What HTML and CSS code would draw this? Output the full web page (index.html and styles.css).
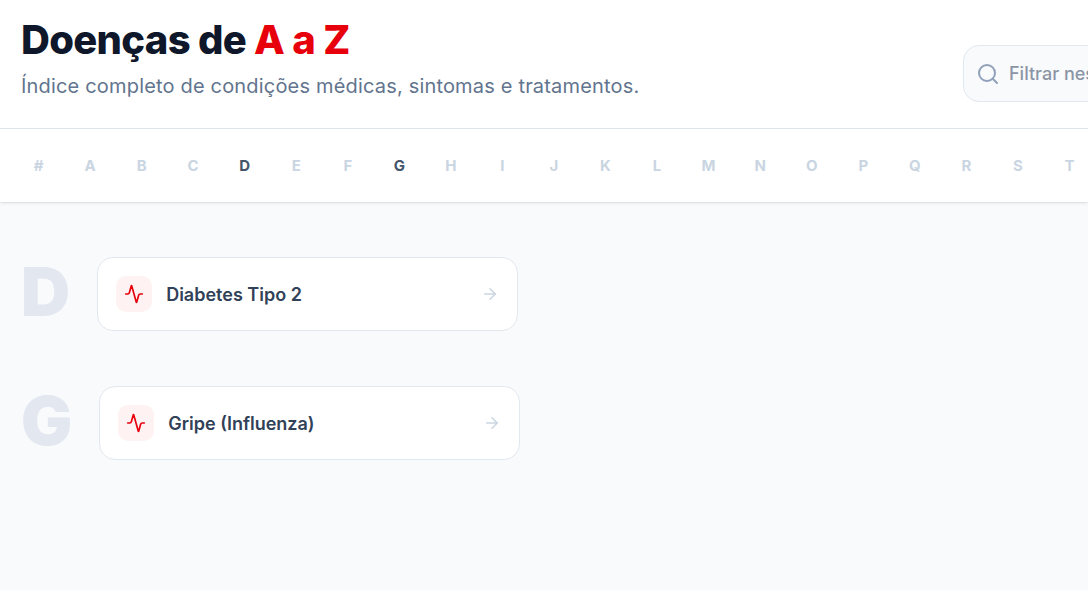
FILE: index.html
```html
<!DOCTYPE html>
<html lang="pt-BR">
<head>
	<meta charset="utf-8">
	<title>Doenças de A a Z</title>
	<link rel="stylesheet" href="styles.css">
</head>
<body>
	<header class="page-header">
		<div class="heading">
			<h1>Doenças de <span class="accent">A a Z</span></h1>
			<p>Índice completo de condições médicas, sintomas e tratamentos.</p>
		</div>
		<label class="search">
			<svg width="24" height="24" viewBox="0 0 24 24" fill="none" stroke="currentColor" stroke-width="2" stroke-linecap="round" stroke-linejoin="round">
				<circle cx="11" cy="11" r="8"></circle>
				<path d="m21 21-4.3-4.3"></path>
			</svg>
			<input type="text" placeholder="Filtrar nesta página...">
		</label>
	</header>
	<nav class="letters">
		<a href="#">#</a>
		<a href="#">A</a>
		<a href="#">B</a>
		<a href="#">C</a>
		<a href="#" class="active">D</a>
		<a href="#">E</a>
		<a href="#">F</a>
		<a href="#" class="active">G</a>
		<a href="#">H</a>
		<a href="#">I</a>
		<a href="#">J</a>
		<a href="#">K</a>
		<a href="#">L</a>
		<a href="#">M</a>
		<a href="#">N</a>
		<a href="#">O</a>
		<a href="#">P</a>
		<a href="#">Q</a>
		<a href="#">R</a>
		<a href="#">S</a>
		<a href="#">T</a>
	</nav>
	<main class="index">
		<section class="group">
			<h2>D</h2>
			<a href="#" class="card">
				<span class="card-icon">
					<svg width="20" height="20" viewBox="0 0 24 24" fill="none" stroke="currentColor" stroke-width="2" stroke-linecap="round" stroke-linejoin="round">
						<path d="M22 12h-2.48a2 2 0 0 0-1.93 1.46l-2.35 8.36a.25.25 0 0 1-.48 0L9.24 2.18a.25.25 0 0 0-.48 0l-2.35 8.36A2 2 0 0 1 4.49 12H2"></path>
					</svg>
				</span>
				<span class="card-name">Diabetes Tipo 2</span>
				<svg class="card-arrow" width="18" height="18" viewBox="0 0 24 24" fill="none" stroke="currentColor" stroke-width="2" stroke-linecap="round" stroke-linejoin="round">
					<path d="M5 12h14"></path>
					<path d="m12 5 7 7-7 7"></path>
				</svg>
			</a>
		</section>
		<section class="group">
			<h2>G</h2>
			<a href="#" class="card">
				<span class="card-icon">
					<svg width="20" height="20" viewBox="0 0 24 24" fill="none" stroke="currentColor" stroke-width="2" stroke-linecap="round" stroke-linejoin="round">
						<path d="M22 12h-2.48a2 2 0 0 0-1.93 1.46l-2.35 8.36a.25.25 0 0 1-.48 0L9.24 2.18a.25.25 0 0 0-.48 0l-2.35 8.36A2 2 0 0 1 4.49 12H2"></path>
					</svg>
				</span>
				<span class="card-name">Gripe (Influenza)</span>
				<svg class="card-arrow" width="18" height="18" viewBox="0 0 24 24" fill="none" stroke="currentColor" stroke-width="2" stroke-linecap="round" stroke-linejoin="round">
					<path d="M5 12h14"></path>
					<path d="m12 5 7 7-7 7"></path>
				</svg>
			</a>
		</section>
	</main>
</body>
</html>
```

FILE: styles.css
```css
* {
	box-sizing: border-box;
}
html, body {
	height: 100%;
}
body {
	margin: 0;
	overflow: hidden;
	background: #f8fafc;
	font-family: "Inter", "Liberation Sans", sans-serif;
	color: #0f172b;
}
.page-header {
	display: flex;
	justify-content: space-between;
	align-items: flex-end;
	width: 1262px;
	height: 129px;
	padding: 12px 21px 28px;
	background: #fff;
	border-bottom: 1px solid #e2e8f0;
}
.page-header h1 {
	margin: 0;
	font-size: 40px;
	line-height: 48px;
	font-weight: 850;
	letter-spacing: -0.7px;
}
.accent {
	color: #e7000b;
}
.page-header p {
	margin: 8px 0 0;
	font-size: 20px;
	line-height: 28px;
	letter-spacing: 0.18px;
	color: #62748e;
}
.search {
	display: flex;
	align-items: center;
	gap: 9px;
	flex: none;
	width: 278px;
	height: 57px;
	margin-bottom: -2px;
	padding: 0 12px;
	background: #f8fafc;
	border: 1px solid #e2e8f0;
	border-radius: 16px;
	color: #90a1b9;
}
.search svg {
	flex: none;
}
.search input {
	flex: 1;
	min-width: 0;
	border: 0;
	outline: 0;
	padding: 0;
	background: none;
	font: 500 18px "Inter", sans-serif;
}
.search input::placeholder {
	color: #8b95a5;
}
.letters {
	display: flex;
	gap: 31.55px;
	height: 73px;
	padding: 0 0 1px 28.5px;
	align-items: center;
	background: #fff;
	box-shadow: 0 1px 3px rgba(0, 0, 0, 0.1), 0 1px 2px -1px rgba(0, 0, 0, 0.1);
}
.letters a {
	flex: none;
	width: 20px;
	text-align: center;
	font-size: 15px;
	font-weight: 700;
	text-decoration: none;
	color: #cad5e2;
}
.letters a.active {
	color: #45556c;
}
.index {
	padding: 55px 21px 0;
}
.group {
	display: flex;
	gap: 27px;
	margin-bottom: 55px;
}
.group h2 {
	margin: 0;
	font-size: 68px;
	line-height: 69px;
	font-weight: 900;
	color: #e2e7f0;
}
.card {
	display: flex;
	align-items: center;
	gap: 14px;
	width: 421px;
	height: 74px;
	padding: 0 18px;
	background: #fff;
	border: 1px solid #e2e8f0;
	border-radius: 16px;
	text-decoration: none;
}
.card-icon {
	display: flex;
	align-items: center;
	justify-content: center;
	flex: none;
	width: 36px;
	height: 36px;
	background: #fef2f2;
	border-radius: 10px;
	color: #e7000b;
}
.card-name {
	flex: 1;
	font-size: 18px;
	font-weight: 575;
	color: #314158;
}
.card-arrow {
	flex: none;
	color: #cad5e2;
}
```
